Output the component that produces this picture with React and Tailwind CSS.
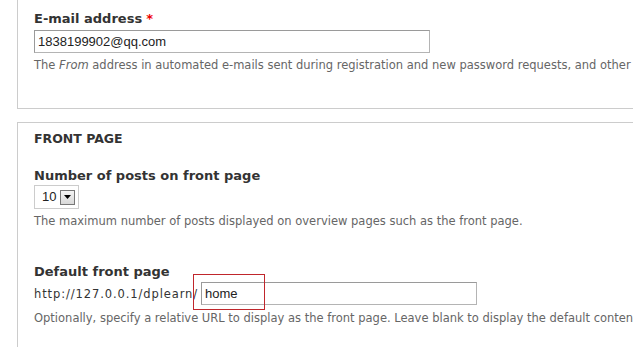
import React from "react";

const sans = { fontFamily: '"DejaVu Sans", Verdana, sans-serif' };
const arial = { fontFamily: '"Liberation Sans", Arial, sans-serif' };

const Label = ({ children, required }) => (
  <div className="text-[13px] leading-[16px] font-bold text-[#333]" style={sans}>
    {children}
    {required && <span className="text-[#e00] ml-[4px]">*</span>}
  </div>
);

const Desc = ({ children }) => (
  <div className="text-[11.5px] leading-[16px] text-[#666] whitespace-nowrap" style={sans}>
    {children}
  </div>
);

const TextInput = ({ value, className }) => (
  <div
    className={`h-[23px] border border-[#b4b4b4] border-t-[#9a9a9a] border-l-[#9a9a9a] bg-white pl-[3px] flex items-center text-[13px] text-[#222] ${className}`}
    style={arial}
  >
    {value}
  </div>
);

const App = () => {
  return (
    <div className="w-[633px] h-[347px] overflow-hidden bg-white">
      {/* Site information fieldset (top cut off) */}
      <div className="ml-[17px] w-[700px] border border-t-0 border-[#ccc] pl-[16px] pt-[11px] pb-[35px]">
        <Label required>E-mail address</Label>
        <TextInput value="1838199902@qq.com" className="mt-[3px] w-[396px]" />
        <div className="mt-[4px]">
          <Desc>
            The <em>From</em> address in automated e-mails sent during registration and new
            password requests, and other notifications. (Use an address ending in your site's domain.)
          </Desc>
        </div>
      </div>

      {/* Front page fieldset */}
      <div className="mt-[13px] ml-[17px] w-[700px] border border-b-0 border-[#ccc] pl-[16px] pt-[8px] pb-[40px]">
        <div className="text-[12.5px] leading-[16px] font-bold text-[#333] uppercase" style={sans}>
          Front page
        </div>

        <div className="mt-[21px]">
          <Label>Number of posts on front page</Label>
        </div>
        <div
          className="mt-[1px] w-[45px] h-[24px] border border-[#ccc] bg-white flex items-center pl-[7px] gap-[4px]"
          style={arial}
        >
          <span className="text-[13px] text-[#222]">10</span>
          <div className="w-[15px] h-[15px] border border-[#777] bg-gradient-to-b from-[#f4f4f4] to-[#d8d8d8] flex items-center justify-center">
            <svg width="7" height="4" viewBox="0 0 7 4">
              <path d="M0 0h7L3.5 4z" fill="#000" />
            </svg>
          </div>
        </div>
        <div className="mt-[4px]">
          <Desc>The maximum number of posts displayed on overview pages such as the front page.</Desc>
        </div>

        <div className="mt-[35px]">
          <Label>Default front page</Label>
        </div>
        <div className="mt-[2px] flex items-center">
          <span
            className="text-[11.5px] leading-[16px] text-[#333] tracking-[0.9px] w-[167px] whitespace-nowrap"
            style={sans}
          >
            http://127.0.0.1/dplearn/
          </span>
          <div className="relative">
            <TextInput value="home" className="w-[276px]" />
            <div className="absolute left-[-8px] top-[-8px] w-[72px] h-[36px] border border-[#c0262c] pointer-events-none" />
          </div>
        </div>
        <div className="mt-[5px]">
          <Desc>
            Optionally, specify a relative URL to display as the front page. Leave blank to display
            the default content feed.
          </Desc>
        </div>
      </div>
    </div>
  );
};

export default App;
